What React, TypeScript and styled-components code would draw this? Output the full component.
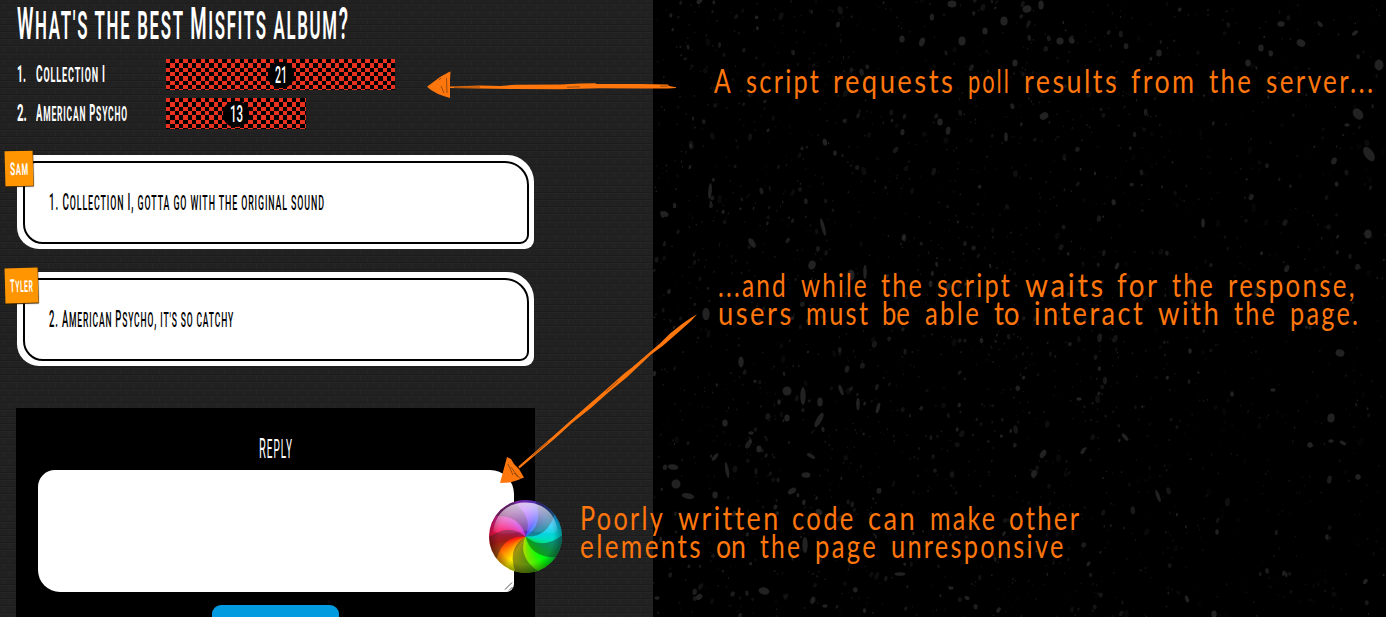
import React, { useLayoutEffect, useRef, useState } from 'react';
import styled, { createGlobalStyle } from 'styled-components';

const GlobalStyle = createGlobalStyle`
  * { box-sizing: border-box; }
  body { margin: 0; background: #000; }
`;

const ORANGE = '#ff760d';

const Stage = styled.div`
  position: relative;
  display: flex;
  width: 1386px;
  height: 617px;
  overflow: hidden;
  background: #000;
`;

/* ---------- condensed lettering ---------- */

const FitBox = styled.span<{ $width: number }>`
  display: inline-block;
  flex: none;
  width: ${(p) => p.$width}px;
  white-space: nowrap;
`;

const FitInner = styled.span<{ $spacing: number }>`
  display: inline-block;
  letter-spacing: ${(p) => p.$spacing}em;
  margin-right: ${(p) => -p.$spacing}em;
  transform-origin: 0 50%;
`;

const Small = styled.span`
  font-size: 0.9em;
  text-transform: uppercase;
`;

type FitProps = { text: string; width: number; caps?: boolean };

function Fit({ text, width, caps = false }: FitProps) {
  const ref = useRef<HTMLSpanElement>(null);
  const [scale, setScale] = useState(1);
  const spacing = text.length > 2 ? 0.09 : 0;
  useLayoutEffect(() => {
    const el = ref.current;
    if (!el) return;
    const trailing = parseFloat(getComputedStyle(el).fontSize) * spacing;
    setScale(width / (el.offsetWidth - trailing));
  }, [text, width, spacing]);
  const parts = caps ? text.split(/([a-z][a-z' ]*)/).filter(Boolean) : [text];
  return (
    <FitBox $width={width}>
      <FitInner ref={ref} $spacing={spacing} style={{ transform: `scaleX(${scale})` }}>
        {parts.map((part, i) => (caps && /^[a-z]/.test(part) ? <Small key={i}>{part}</Small> : part))}
      </FitInner>
    </FitBox>
  );
}

/* ---------- forum page ---------- */

const Page = styled.main`
  display: flex;
  flex-direction: column;
  flex: none;
  width: 653px;
  height: 617px;
  padding: 0 0 0 16px;
  font-family: Roboto, 'Liberation Sans', sans-serif;
  color: #fff;
  background-color: #212121;
  background-image:
    linear-gradient(90deg, #262626 1px, transparent 1px),
    linear-gradient(90deg, #262626 1px, transparent 1px),
    linear-gradient(#1c1c1c 1px, #252525 1px, #252525 2px, transparent 2px);
  background-size: 13px 14px, 13px 14px, 13px 7px;
  background-position: 0 0, 0 0, 0 3px;
  background-image:
    linear-gradient(#1c1c1c 1px, #252525 1px, #252525 2px, transparent 2px),
    conic-gradient(from 0deg at 1px 7px, transparent 75%, #262626 0),
    conic-gradient(from 0deg at 1px 7px, transparent 75%, #262626 0);
  background-size: 13px 7px, 13px 14px, 13px 14px;
  background-position: 0 3px, 3px 3px, 9px 10px;
`;

const Title = styled.h1`
  margin: 0;
  padding-left: 1px;
  height: 59px;
  font-size: 44px;
  font-weight: 600;
  line-height: 49px;
`;

const Row = styled.div`
  display: flex;
  height: 31px;
  margin-bottom: 8px;
  font-size: 23px;
  font-weight: 700;
  line-height: 32px;
`;

const Index = styled.div`
  width: 20px;
  padding-left: 1px;
`;

const RowLabel = styled.div`
  width: 130px;
`;

const Bar = styled.div<{ $width: number }>`
  display: flex;
  align-items: center;
  justify-content: center;
  width: ${(p) => p.$width}px;
  height: 31px;
  background:
    linear-gradient(#e8321f, #e8321f),
    repeating-linear-gradient(90deg, #fff 0 4.33px, #000 4.33px 8.67px),
    repeating-linear-gradient(#000 0 4.33px, #fff 4.33px 8.67px);
  background-blend-mode: multiply, difference, normal;
`;

const Count = styled.div`
  display: flex;
  justify-content: center;
  width: 26px;
  height: 26px;
  border-radius: 12px;
  background: #000;
  font-size: 23px;
  font-weight: 500;
  line-height: 28px;
`;

const Card = styled.article<{ $top: number }>`
  position: relative;
  flex: none;
  width: 517px;
  height: 94px;
  margin: ${(p) => p.$top}px 0 0 1px;
  padding: 6px 5px 5px 6px;
  border-radius: 12px 27px 9px 22px;
  background: #fff;
`;

const CardBody = styled.div`
  height: 83px;
  padding-left: 24px;
  border: 2px solid #000;
  border-radius: 12px 24px 9px 20px;
  color: #000;
  font-size: 23px;
  font-weight: 500;
  line-height: 79px;
`;

const Tag = styled.div<{ $width: number }>`
  position: absolute;
  left: -12px;
  top: -4px;
  display: flex;
  justify-content: center;
  width: ${(p) => p.$width}px;
  height: 35px;
  background: #ff9500;
  box-shadow: 0.5px 1px 1px #3a2200;
  color: #fff;
  font-size: 18px;
  font-weight: 700;
  line-height: 35px;
  transform: rotate(-1.5deg);
`;

const ReplyPanel = styled.section`
  display: flex;
  flex: none;
  flex-direction: column;
  align-items: center;
  width: 519px;
  height: 209px;
  margin-top: 42px;
  background: #000;
`;

const ReplyTitle = styled.h2`
  flex: none;
  margin: 0;
  height: 62px;
  font-size: 28px;
  font-weight: 400;
  line-height: 81px;
`;

const ReplyField = styled.div`
  display: flex;
  flex: none;
  align-items: flex-end;
  justify-content: flex-end;
  width: 476px;
  height: 122px;
  border-radius: 17px 24px 8px 22px;
  background: #fff;
`;

const Submit = styled.div`
  flex: none;
  width: 127px;
  height: 40px;
  margin-top: 13px;
  border-radius: 9px;
  background: #039be0;
`;

/* ---------- speckled backdrop ---------- */

const Backdrop = styled.aside`
  flex: none;
  width: 733px;
  height: 617px;
  background: #000;
`;

function makeRandom(seed: number) {
  let s = seed;
  return () => {
    s = (s * 1664525 + 1013904223) % 4294967296;
    return s / 4294967296;
  };
}

const rand = makeRandom(77);
const specks = Array.from({ length: 2800 }, () => {
  const x = rand() * 733;
  const y = rand() * 617;
  const keep = x < 470 ? 1 : 0.45;
  const size = 0.6 + Math.pow(rand(), 5) * 1.9;
  return {
    x,
    y,
    rx: size,
    ry: size * (1 + rand() * 0.9),
    o: (0.2 + rand() * 0.6) * (rand() < keep ? 1 : 0.2),
    a: rand() * 50 - 15,
  };
});

/* x, y, rx, ry, angle */
const flakes: number[][] = [
  [299, 4, 5, 4, 0], [374, 9, 5, 4, -20], [388, 5, 3, 5, 0], [351, 21, 4, 5, 0], [309, 41, 4, 5, 0], [269, 42, 3, 5, 20],
  [249, 39, 3, 4, 0], [407, 41, 4, 4, 0], [419, 41, 3, 3, 0], [332, 31, 3, 4, 0], [391, 116, 5, 4, -30], [353, 137, 2, 5, 0],
  [287, 122, 3, 4, 0], [362, 63, 3, 4, 0], [506, 53, 3, 4, 0], [628, 24, 4, 3, 0], [648, 43, 5, 4, 30], [608, 48, 3, 4, 0],
  [595, 63, 3, 4, 0], [667, 24, 2, 4, -40], [702, 33, 4, 2, -40], [726, 65, 5, 6, 0], [705, 114, 5, 7, -40], [694, 125, 3, 2, 0],
  [716, 154, 5, 9, -35], [681, 161, 3, 4, 20], [57, 191, 2, 9, 5], [170, 227, 2, 10, -15], [99, 243, 3, 6, -35],
  [182, 153, 2, 3, 0], [212, 272, 2, 8, 0], [159, 265, 4, 5, 20], [53, 314, 4, 7, 0], [198, 275, 4, 6, 0], [715, 234, 4, 5, 0],
  [550, 223, 2, 5, 0], [464, 266, 2, 4, 25], [88, 362, 3, 6, 0], [134, 391, 5, 5, 0], [150, 396, 3, 10, 0],
  [166, 420, 3, 9, 30], [134, 418, 3, 4, 0], [188, 390, 2, 6, -20], [205, 404, 2, 7, 0], [225, 408, 2, 6, 15], [167, 402, 3, 5, 0],
  [126, 402, 2, 3, 0], [74, 470, 2, 9, -10], [20, 467, 6, 3, 10], [153, 475, 5, 3, 0], [23, 484, 5, 5, 0], [35, 496, 7, 3, 10],
  [62, 495, 3, 4, 0], [139, 491, 5, 3, -30], [62, 457, 5, 2, -50], [390, 454, 3, 5, 30], [430, 451, 2, 4, 30], [472, 437, 2, 5, -40],
  [505, 496, 2, 7, -20], [687, 353, 5, 4, 20], [678, 418, 4, 5, 10], [657, 445, 3, 3, 0], [690, 443, 4, 2, 30], [678, 441, 3, 2, 0],
  [705, 477, 3, 3, 0], [674, 537, 2, 3, 0], [620, 390, 3, 2, 0], [579, 394, 2, 3, 0], [564, 532, 2, 3, 0], [534, 599, 2, 4, -20],
  [561, 614, 3, 4, 0], [111, 591, 6, 4, 10], [46, 597, 4, 3, -40], [4, 598, 3, 2, 0], [298, 588, 3, 2, 0], [314, 598, 3, 2, 20],
  [172, 606, 3, 2, 0], [152, 545, 3, 9, 0], [247, 574, 6, 2, 0], [166, 512, 4, 3, 40], [72, 423, 3, 4, 0], [98, 433, 3, 2, 0],
  [106, 449, 3, 4, 0], [158, 456, 5, 2, 30], [426, 399, 3, 2, 0], [537, 351, 2, 3, 0], [12, 214, 4, 3, 30],
];

function Speckles() {
  return (
    <svg width="733" height="617" viewBox="0 0 733 617">
      {specks.map((s, i) => (
        <ellipse key={i} cx={s.x} cy={s.y} rx={s.rx} ry={s.ry} fill="#2b2b2b" opacity={s.o} transform={`rotate(${s.a} ${s.x} ${s.y})`} />
      ))}
      {flakes.map(([x, y, rx, ry, a], i) => (
        <ellipse key={`f${i}`} cx={x} cy={y} rx={rx * 0.9} ry={ry * 0.9} fill="#222" transform={`rotate(${a} ${x} ${y})`} />
      ))}
    </svg>
  );
}

/* ---------- annotations ---------- */

const Note = styled.div<{ $x: number; $y: number }>`
  position: absolute;
  left: ${(p) => p.$x}px;
  top: ${(p) => p.$y}px;
  display: flex;
  flex-direction: column;
  color: ${ORANGE};
  font-family: Lato, 'Open Sans', sans-serif;
  font-size: 32px;
  font-weight: 400;
  font-variant-ligatures: none;
  line-height: 28px;
`;

const NoteLine = styled.div`
  display: flex;
  gap: 14.7px;
  height: 28px;
`;

type Word = [string, number];

const requestNote: Word[][] = [
  [['A', 17], ['script', 73], ['requests', 120], ['poll', 41], ['results', 93], ['from', 63], ['the', 42], ['server...', 107]],
];
const waitNote: Word[][] = [
  [['...and', 68], ['while', 66], ['the', 41], ['script', 73], ['waits', 78], ['for', 40], ['the', 41], ['response,', 127]],
  [['users', 73], ['must', 62], ['be', 28], ['able', 54], ['to', 26], ['interact', 109], ['with', 61], ['the', 41], ['page.', 68]],
];
const frozenNote: Word[][] = [
  [['Poorly', 83], ['written', 100], ['code', 61], ['can', 47], ['make', 65], ['other', 70]],
  [['elements', 121], ['on', 30], ['the', 40], ['page', 61], ['unresponsive', 172]],
];

function Annotation({ x, y, lines }: { x: number; y: number; lines: Word[][] }) {
  return (
    <Note $x={x} $y={y}>
      {lines.map((line, i) => (
        <NoteLine key={i}>
          {line.map(([word, width], j) => (
            <Fit key={j} text={word} width={width} />
          ))}
        </NoteLine>
      ))}
    </Note>
  );
}

const ArrowLayer = styled.svg`
  position: absolute;
  left: 0;
  top: 0;
`;

function Arrows() {
  return (
    <ArrowLayer width="1386" height="617" viewBox="0 0 1386 617">
      <g fill={ORANGE}>
        <path d="M427 86.7L434 81.5L440 77L449 72L450.5 71.5L450 80L450 98L445 96.5L438 94L431 90Z" />
        <path d="M450 86.4L481 85.4L500 86L515 84.8L560 84.4L580 83.4L595 83.3L597 84L640 84L668 84.4L669 86L676 87.2L676 88L668 88.4L640 88.6L600 88.2L560 89.2L515 89L480 88.4L450 88Z" />
        <path d="M500 483L507 457L511 459L514 464L519 469L524 477.5L518 480L510 482.5Z" />
        <path d="M518.3 466.4L553.6 435.7L588.8 404.5L605 390.5L624.2 373.4L632 367.5L650 352L660.2 343.3L670 333.5L682 324L690 318.5L697 314.2L691 321L677 333.6L662.6 346.1L651 354.6L627.2 377L608 392.8L591.5 407.6L572 423L555.5 437.9L519.4 468.4Z" />
      </g>
      <g stroke="#54300f" strokeWidth="0.6" fill="none">
        <path d="M446.5 78L447 93M441 86L444 93M439 80L441 78M454 87.3L480 87M567 87.2L580 86.8M660 86.3L668 86" />
        <path d="M508 464L513 475M511 467L518 477M514 473L521 479M606 391.5L618 381M532 456L548 442" />
      </g>
    </ArrowLayer>
  );
}

const Ball = styled.div`
  position: absolute;
  left: 489px;
  top: 500px;
  width: 73px;
  height: 73px;
  border-radius: 50%;
  overflow: hidden;
  background: conic-gradient(
    #9c3cff 0deg, #4a4cff 30deg, #10c8ff 65deg, #00dcc8 95deg, #00e070 115deg, #00ff08 142deg, #8be000 178deg,
    #ffea00 212deg, #ff6a00 240deg, #ff1a10 258deg, #ff1463 282deg, #d838d0 320deg, #9c3cff 360deg
  );
`;

function polar(deg: number, r: number) {
  const t = (deg * Math.PI) / 180;
  return `${(36.5 + Math.sin(t) * r).toFixed(2)} ${(36.5 - Math.cos(t) * r).toFixed(2)}`;
}

function BeachBall() {
  return (
    <Ball>
      <svg width="73" height="73" viewBox="0 0 73 73">
        <defs>
          <radialGradient id="rim" cx="50%" cy="50%" r="50%">
            <stop offset="76%" stopColor="#000" stopOpacity="0" />
            <stop offset="100%" stopColor="#000" stopOpacity="0.36" />
          </radialGradient>
          <linearGradient id="gloss" x1="0" y1="0" x2="0" y2="1">
            <stop offset="0" stopColor="#fff" stopOpacity="0.75" />
            <stop offset="1" stopColor="#fff" stopOpacity="0.04" />
          </linearGradient>
        </defs>
        {[16, 88, 160, 232, 304].map((a) => (
          <path
            key={a}
            d={`M36.5 36.5Q${polar(a + 42, 22)} ${polar(a, 37)}A37 37 0 0 1 ${polar(a + 36, 37)}Q${polar(a + 78, 22)} 36.5 36.5Z`}
            fill="#202020"
            opacity="0.42"
          />
        ))}
        <circle cx="36.5" cy="36.5" r="36.5" fill="url(#rim)" />
        <path d="M4.5 31C6 14 19 2.5 36.5 2.5S67 14 68.5 31C60 37 48 30 36.5 31S14 38 4.5 31Z" fill="url(#gloss)" />
      </svg>
    </Ball>
  );
}

export default function App() {
  return (
    <>
      <GlobalStyle />
      <Stage>
        <Page>
          <Title>
            <Fit caps text="What's the best Misfits album?" width={331} />
          </Title>
          <Row>
            <Index><Fit text="1." width={9} /></Index>
            <RowLabel><Fit caps text="Collection I" width={69} /></RowLabel>
            <Bar $width={229}><Count><Fit text="21" width={12} /></Count></Bar>
          </Row>
          <Row>
            <Index><Fit text="2." width={10} /></Index>
            <RowLabel><Fit caps text="American Psycho" width={91} /></RowLabel>
            <Bar $width={140}><Count><Fit text="13" width={13} /></Count></Bar>
          </Row>
          <Card $top={18}>
            <CardBody><Fit caps text="1. Collection I, gotta go with the original sound" width={275} /></CardBody>
            <Tag $width={28}><Fit caps text="Sam" width={18} /></Tag>
          </Card>
          <Card $top={23}>
            <CardBody><Fit caps text="2. American Psycho, it's so catchy" width={184} /></CardBody>
            <Tag $width={33}><Fit caps text="Tyler" width={23} /></Tag>
          </Card>
          <ReplyPanel>
            <ReplyTitle><Fit caps text="Reply" width={33} /></ReplyTitle>
            <ReplyField>
              <svg width="11" height="11" viewBox="0 0 11 11" stroke="#555" strokeWidth="1">
                <path d="M2 8.5L9 1.5M6 9.5L9.5 6" />
              </svg>
            </ReplyField>
            <Submit />
          </ReplyPanel>
        </Page>
        <Backdrop>
          <Speckles />
        </Backdrop>
        <Arrows />
        <BeachBall />
        <Annotation x={714} y={67} lines={requestNote} />
        <Annotation x={718} y={271} lines={waitNote} />
        <Annotation x={580} y={504} lines={frozenNote} />
      </Stage>
    </>
  );
}
